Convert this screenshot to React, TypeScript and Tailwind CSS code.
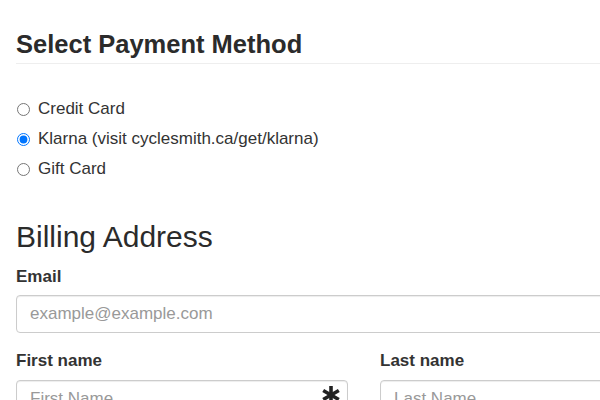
import React from 'react';

const METHODS = [
  { id: 'cc', label: 'Credit Card' },
  { id: 'klarna', label: 'Klarna (visit cyclesmith.ca/get/klarna)' },
  { id: 'gift', label: 'Gift Card' },
];

const inputCls =
  'block h-[38px] w-full rounded-[4px] border border-[#ccc] bg-white px-[13px] text-[17px] text-[#555] shadow-[inset_0_1px_1px_rgba(0,0,0,.075)] outline-none placeholder:text-[#999]';

export default function App() {
  const [method, setMethod] = React.useState('klarna');

  return (
    <div className="h-[400px] w-[600px] overflow-hidden bg-white font-['Liberation_Sans',Arial,sans-serif] text-[17px] text-[#333]">
      <div className="w-[760px] pl-4">
        <h3 className="mt-[31px] border-b border-[#eee] pb-[6px] text-[25.5px] font-bold leading-[26px] text-[#2b2b2b]">
          Select Payment Method
        </h3>

        <div className="mt-[30px]">
          {METHODS.map(m => (
            <label key={m.id} className="flex h-[30px] items-center">
              <input
                type="radio"
                name="method"
                checked={method === m.id}
                onChange={() => setMethod(m.id)}
                className="ml-[1px] mr-[8px] h-[13px] w-[13px] accent-[#0075ff]"
              />
              <span>{m.label}</span>
            </label>
          ))}
        </div>

        <h2 className="mt-[35px] text-[30px] leading-[36px] text-[#2b2b2b]">Billing Address</h2>

        <label className="mt-[12px] block font-bold leading-[20px]">Email</label>
        <input className={`${inputCls} mt-[8px] w-[696px]`} placeholder="example@example.com" />

        <div className="mt-[18px] grid w-[696px] grid-cols-2 gap-x-[32px]">
          <div>
            <label className="block font-bold leading-[20px]">First name</label>
            <div className="relative mt-[9px]">
              <input className={inputCls} placeholder="First Name" />
              <svg
                className="absolute right-[8px] top-[6px] h-[18px] w-[18px]"
                viewBox="0 0 18 18"
                aria-hidden="true"
              >
                <g stroke="#222" strokeWidth="3.6" strokeLinecap="butt">
                  <line x1="9" y1="0" x2="9" y2="18" />
                  <line x1="1.2" y1="4.5" x2="16.8" y2="13.5" />
                  <line x1="1.2" y1="13.5" x2="16.8" y2="4.5" />
                </g>
              </svg>
            </div>
          </div>
          <div>
            <label className="block font-bold leading-[20px]">Last name</label>
            <input className={`${inputCls} mt-[9px]`} placeholder="Last Name" />
          </div>
        </div>
      </div>
    </div>
  );
}
